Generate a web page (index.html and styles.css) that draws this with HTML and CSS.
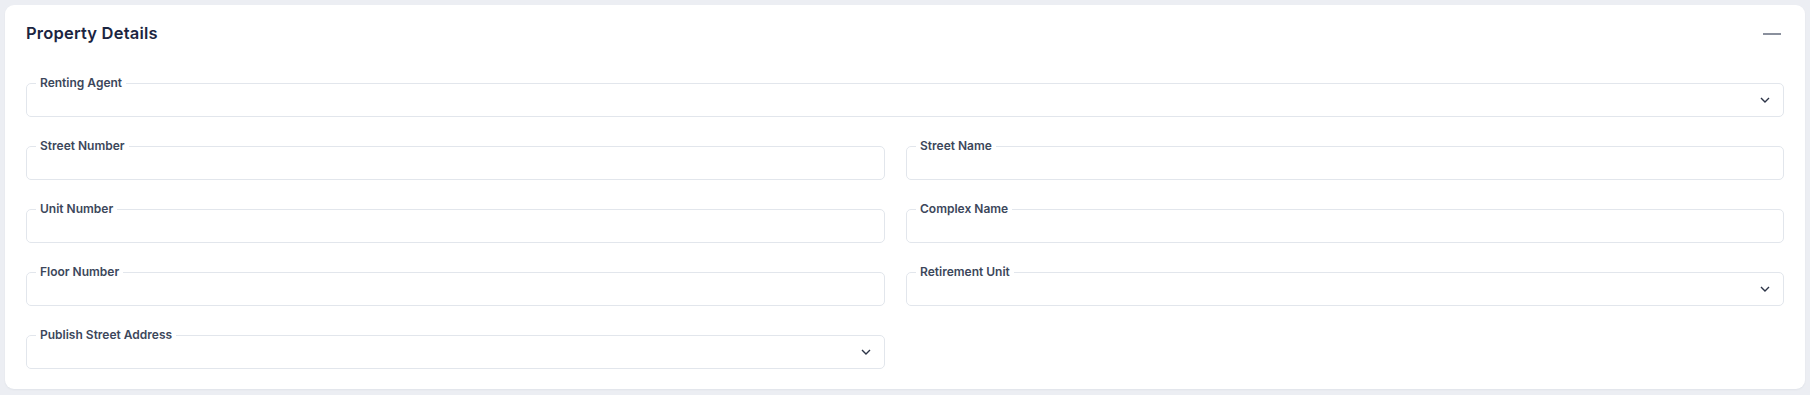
FILE: index.html
```html
<!DOCTYPE html>
<html lang="en">
<head>
  <meta charset="UTF-8" />
  <meta name="viewport" content="width=device-width, initial-scale=1.0"/>
  <title>Property Details</title>
  <link rel="stylesheet" href="styles.css">
</head>
<body>
  <div class="card">
    <div class="card-header">
      <h2>Property Details</h2>
      <button class="collapse-btn" aria-label="Collapse">
        <svg viewBox="0 0 24 24"><path d="M3 12h18"/></svg>
      </button>
    </div>

    <div class="form-grid">
      <fieldset class="field select full">
        <legend>Renting Agent</legend>
        <div class="control"><svg class="chevron" viewBox="0 0 10 6"><path d="M1 1l4 4 4-4"/></svg></div>
      </fieldset>

      <fieldset class="field">
        <legend>Street Number</legend>
        <div class="control"></div>
      </fieldset>
      <fieldset class="field">
        <legend>Street Name</legend>
        <div class="control"></div>
      </fieldset>

      <fieldset class="field">
        <legend>Unit Number</legend>
        <div class="control"></div>
      </fieldset>
      <fieldset class="field">
        <legend>Complex Name</legend>
        <div class="control"></div>
      </fieldset>

      <fieldset class="field">
        <legend>Floor Number</legend>
        <div class="control"></div>
      </fieldset>
      <fieldset class="field select">
        <legend>Retirement Unit</legend>
        <div class="control"><svg class="chevron" viewBox="0 0 10 6"><path d="M1 1l4 4 4-4"/></svg></div>
      </fieldset>

      <fieldset class="field select">
        <legend>Publish Street Address</legend>
        <div class="control"><svg class="chevron" viewBox="0 0 10 6"><path d="M1 1l4 4 4-4"/></svg></div>
      </fieldset>
    </div>
  </div>
</body>
</html>
```

FILE: styles.css
```css
body {
  background-color: #eceef3;
  font-family: Inter, 'Noto Sans', sans-serif;
  margin: 0;
  padding: 5px;
}

.card {
  background: white;
  border-radius: 9px;
  padding: 16px 21px 20px 21px;
  box-shadow: 0 1px 2px rgba(20, 30, 60, 0.05);
}

.card-header {
  display: flex;
  justify-content: space-between;
  align-items: center;
  height: 24px;
  margin-bottom: 30px;
}

.card-header h2 {
  margin: 0;
  font-size: 16.5px;
  font-weight: 600;
  letter-spacing: 0.2px;
  line-height: 24px;
  color: #1b2541;
}

.collapse-btn {
  background: none;
  border: none;
  padding: 0;
  width: 24px;
  height: 24px;
  margin-top: 2px;
  cursor: pointer;
}

.collapse-btn svg {
  width: 24px;
  height: 24px;
  stroke: #8a909d;
  stroke-width: 2;
  fill: none;
  display: block;
}

/* Form fields */
.form-grid {
  display: grid;
  grid-template-columns: 859fr 878fr;
  gap: 21px 21px;
}

.field {
  margin: 0;
  min-width: 0;
  padding: 0 13px 0 9px;
  border: 1px solid #e2e6ec;
  border-radius: 5px;
}

.field.full {
  grid-column: 1 / -1;
}

.field legend {
  padding: 0 4px;
  font-size: 12px;
  font-weight: 600;
  line-height: 16px;
  color: #3c475b;
}

.control {
  height: 33px;
  margin-top: -8px;
  display: flex;
  align-items: center;
  justify-content: flex-end;
}

.chevron {
  width: 10px;
  height: 6px;
  fill: none;
  stroke: #2c3447;
  stroke-width: 1.4;
}
```
